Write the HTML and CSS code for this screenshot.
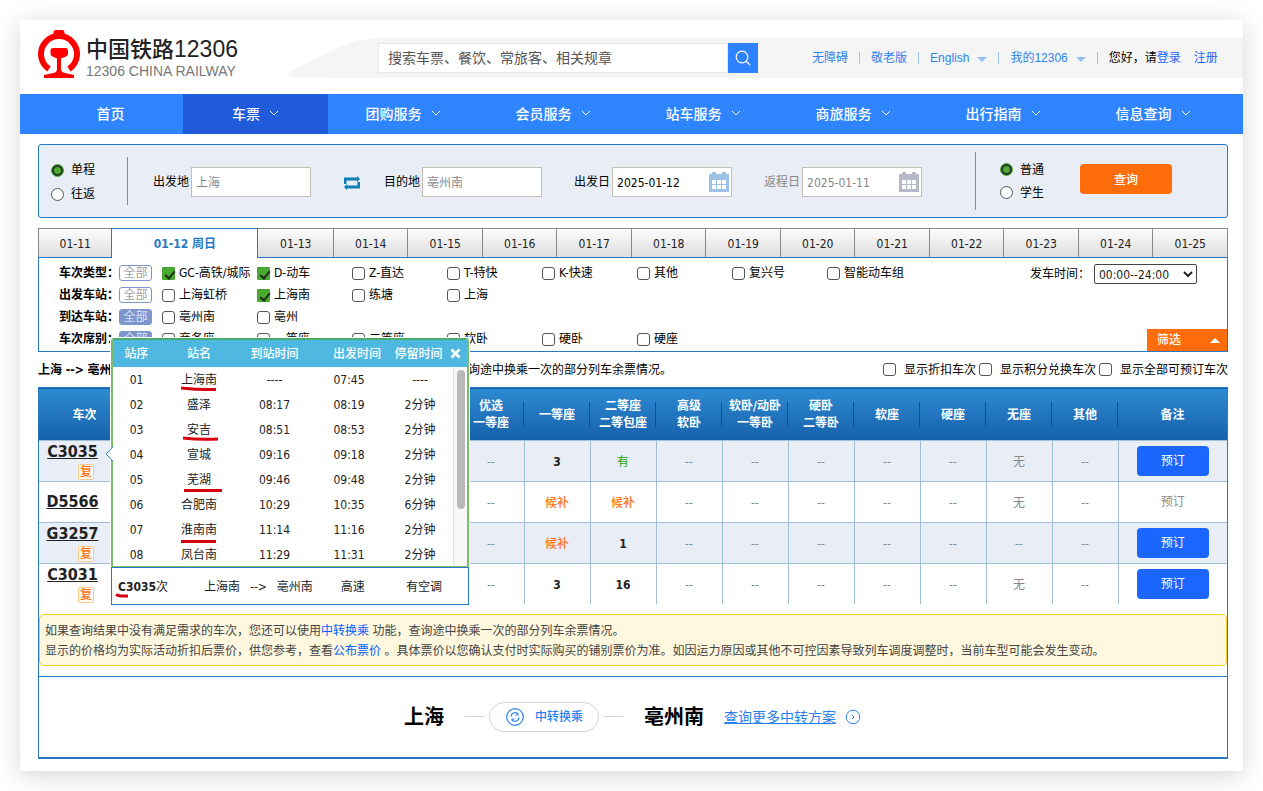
FILE: index.html
```html
<!DOCTYPE html>
<html lang="zh-CN">
<head>
<meta charset="utf-8">
<title>中国铁路12306</title>
<link rel="stylesheet" href="styles.css">
</head>
<body>
<div class="page">
  <header class="header">
    <a class="logo" href="#">
      <svg class="logo-mark" width="42" height="48" viewBox="0 0 42 48" aria-hidden="true">
        <path d="M15.500 2.500Q15.500 0 18 0H24Q26.500 0 26.500 2.500V5H15.500Z" fill="#f00"/>
        <path d="M11 39A18 18 0 1 1 31 39" fill="none" stroke="#f00" stroke-width="6"/>
        <path d="M15 18H27.500Q30 18 30 21V24Q30 26 27 27L23 28.500V39Q23 42 27 43L36 45V48H6V45L15.500 43Q19 42 19 39V28.500L15.500 27Q12.500 26 12.500 24V21Q12.500 18 15 18Z" fill="#f00"/>
      </svg>
      <span class="logo-text">
        <span class="logo-name">中国铁路<span class="logo-num">12306</span></span>
        <span class="logo-sub">12306 CHINA RAILWAY</span>
      </span>
    </a>
    <div class="topbar">
      <svg class="topbar-curve" width="90" height="40" viewBox="0 0 90 40" aria-hidden="true"><path d="M90 0Q68 1 54 8L8 30Q0 33 0 37Q1 39 8 39L40 40H90Z" fill="#f5f5f5"/></svg>
      <div class="topbar-body">
        <form class="search">
          <input class="search-input" type="text" aria-label="搜索" placeholder="搜索车票、餐饮、常旅客、相关规章">
          <button class="search-btn" type="button" aria-label="搜索">
            <svg width="16" height="16" viewBox="0 0 16 16" fill="none" stroke="#fff" stroke-width="1.200"><circle cx="7" cy="7" r="5.800"/><path d="M11 11L15 15"/></svg>
          </button>
        </form>
        <nav class="links">
          <a href="#">无障碍</a><i class="sep"></i>
          <a href="#">敬老版</a><i class="sep"></i>
          <a href="#">English<b class="caret"></b></a><i class="sep"></i>
          <a href="#">我的12306<b class="caret"></b></a><i class="sep"></i>
          <span class="hello">您好，请<a class="strong" href="#">登录</a></span>
          <a class="strong register" href="#">注册</a>
        </nav>
      </div>
    </div>
  </header>

  <nav class="mainnav">
    <a class="nav-item short" href="#">首页</a>
    <a class="nav-item short active" href="#">车票<svg class="chev" viewBox="0 0 10 6"><path d="M1 1L5 5L9 1"/></svg></a>
    <a class="nav-item" href="#">团购服务<svg class="chev" viewBox="0 0 10 6"><path d="M1 1L5 5L9 1"/></svg></a>
    <a class="nav-item" href="#">会员服务<svg class="chev" viewBox="0 0 10 6"><path d="M1 1L5 5L9 1"/></svg></a>
    <a class="nav-item" href="#">站车服务<svg class="chev" viewBox="0 0 10 6"><path d="M1 1L5 5L9 1"/></svg></a>
    <a class="nav-item" href="#">商旅服务<svg class="chev" viewBox="0 0 10 6"><path d="M1 1L5 5L9 1"/></svg></a>
    <a class="nav-item" href="#">出行指南<svg class="chev" viewBox="0 0 10 6"><path d="M1 1L5 5L9 1"/></svg></a>
    <a class="nav-item" href="#">信息查询<svg class="chev" viewBox="0 0 10 6"><path d="M1 1L5 5L9 1"/></svg></a>
  </nav>

  <main class="content">
    <form class="query">
      <div class="radios trip">
        <label><input type="radio" name="trip" checked>单程</label>
        <label><input type="radio" name="trip">往返</label>
      </div>
      <div class="fields">
        <label class="field">出发地<input class="box" type="text" placeholder="上海"></label>
        <button class="swap" type="button" aria-label="交换">
          <svg width="16" height="14" viewBox="0 0 16 14" fill="#0f7fb5"><path d="M0 1.500H13V0L16 3L13 6V4.500H2.500V8H0Z"/><path d="M16 12.500H3V14L0 11L3 8V9.500H13.500V6H16Z"/></svg>
        </button>
        <label class="field">目的地<input class="box" type="text" placeholder="亳州南"></label>
        <label class="field date">出发日<span class="datebox"><input class="box" type="text" value="2025-01-12"><svg class="cal blue" width="20" height="20" viewBox="0 0 20 20"><path d="M0 2H3V0H7V2H13V0H17V2H20V20H0Z" fill="currentColor"/><g fill="#fff"><path d="M3 8H7V12H3ZM8 8H12V12H8ZM13 8H17V12H13ZM3 13H7V17H3ZM8 13H12V17H8ZM13 13H17V17H13Z"/></g></svg></span></label>
        <label class="field date off">返程日<span class="datebox"><input class="box" type="text" value="2025-01-11"><svg class="cal gray" width="20" height="20" viewBox="0 0 20 20"><path d="M0 2H3V0H7V2H13V0H17V2H20V20H0Z" fill="currentColor"/><g fill="#fff"><path d="M3 8H7V12H3ZM8 8H12V12H8ZM13 8H17V12H13ZM3 13H7V17H3ZM8 13H12V17H8ZM13 13H17V17H13Z"/></g></svg></span></label>
      </div>
      <div class="radios kind">
        <label><input type="radio" name="kind" checked>普通</label>
        <label><input type="radio" name="kind">学生</label>
      </div>
      <button class="submit" type="button">查询</button>
    </form>

    <div class="days">
      <button class="day" type="button">01-11</button>
      <button class="day current" type="button">01-12 周日</button>
      <button class="day" type="button">01-13</button>
      <button class="day" type="button">01-14</button>
      <button class="day" type="button">01-15</button>
      <button class="day" type="button">01-16</button>
      <button class="day" type="button">01-17</button>
      <button class="day" type="button">01-18</button>
      <button class="day" type="button">01-19</button>
      <button class="day" type="button">01-20</button>
      <button class="day" type="button">01-21</button>
      <button class="day" type="button">01-22</button>
      <button class="day" type="button">01-23</button>
      <button class="day" type="button">01-24</button>
      <button class="day" type="button">01-25</button>
    </div>

    <section class="filters">
      <div class="filter-rows">
        <div class="frow"><b>车次类型：</b><button class="all" type="button">全部</button>
          <label><input type="checkbox" checked>GC-高铁/城际</label><label><input type="checkbox" checked>D-动车</label><label><input type="checkbox">Z-直达</label><label><input type="checkbox">T-特快</label><label><input type="checkbox">K-快速</label><label><input type="checkbox">其他</label><label><input type="checkbox">复兴号</label><label><input type="checkbox">智能动车组</label></div>
        <div class="frow"><b>出发车站：</b><button class="all" type="button">全部</button>
          <label><input type="checkbox">上海虹桥</label><label><input type="checkbox" checked>上海南</label><label><input type="checkbox">练塘</label><label><input type="checkbox">上海</label></div>
        <div class="frow"><b>到达车站：</b><button class="all on" type="button">全部</button>
          <label><input type="checkbox">亳州南</label><label><input type="checkbox">亳州</label></div>
        <div class="frow"><b>车次席别：</b><button class="all on" type="button">全部</button>
          <label><input type="checkbox">商务座</label><label><input type="checkbox">一等座</label><label><input type="checkbox">二等座</label><label><input type="checkbox">软卧</label><label><input type="checkbox">硬卧</label><label><input type="checkbox">硬座</label></div>
      </div>
      <div class="filter-side">
        <label class="depart">发车时间：<span class="selwrap"><select><option>00:00--24:00</option></select><svg width="10" height="7" viewBox="0 0 10 7"><path d="M1 1L5 5L9 1" fill="none" stroke="#222" stroke-width="2"/></svg></span></label>
        <button class="sift" type="button">筛选<i></i></button>
      </div>
    </section>

    <div class="status">
      <b class="route">上海 --&gt; 亳州</b>
      <span class="tip">询途中换乘一次的部分列车余票情况。</span>
      <div class="opts">
        <label><input type="checkbox">显示折扣车次</label>
        <label><input type="checkbox">显示积分兑换车次</label>
        <label><input type="checkbox">显示全部可预订车次</label>
      </div>
    </div>

    <div class="results">
      <table class="trains">
        <colgroup><col class="c-train"><col><col class="c-seat"><col class="c-seat"><col class="c-seat"><col class="c-seat"><col class="c-seat"><col class="c-seat"><col class="c-seat"><col class="c-seat"><col class="c-seat"><col class="c-seat"><col class="c-act"></colgroup>
        <thead>
          <tr><th>车次</th><th></th><th>优选<br>一等座</th><th>一等座</th><th>二等座<br>二等包座</th><th>高级<br>软卧</th><th>软卧/动卧<br>一等卧</th><th>硬卧<br>二等卧</th><th>软座</th><th>硬座</th><th>无座</th><th>其他</th><th>备注</th></tr>
        </thead>
        <tbody>
          <tr><td class="no"><a href="#">C3035</a><em>复</em></td><td></td><td>--</td><td class="n">3</td><td class="yes">有</td><td>--</td><td>--</td><td>--</td><td>--</td><td>--</td><td>无</td><td>--</td><td><button class="book" type="button">预订</button></td></tr>
          <tr><td class="no"><a href="#">D5566</a></td><td></td><td>--</td><td class="wait">候补</td><td class="wait">候补</td><td>--</td><td>--</td><td>--</td><td>--</td><td>--</td><td>无</td><td>--</td><td>预订</td></tr>
          <tr><td class="no"><a href="#">G3257</a><em>复</em></td><td></td><td>--</td><td class="wait">候补</td><td class="n">1</td><td>--</td><td>--</td><td>--</td><td>--</td><td>--</td><td>--</td><td>--</td><td><button class="book" type="button">预订</button></td></tr>
          <tr><td class="no"><a href="#">C3031</a><em>复</em></td><td></td><td>--</td><td class="n">3</td><td class="n">16</td><td>--</td><td>--</td><td>--</td><td>--</td><td>--</td><td>无</td><td>--</td><td><button class="book" type="button">预订</button></td></tr>
        </tbody>
      </table>

      <div class="notice">
        <p>如果查询结果中没有满足需求的车次，您还可以使用<a href="#">中转换乘</a> 功能，查询途中换乘一次的部分列车余票情况。</p>
        <p>显示的价格均为实际活动折扣后票价，供您参考，查看<a href="#">公布票价</a> 。具体票价以您确认支付时实际购买的铺别票价为准。如因运力原因或其他不可控因素导致列车调度调整时，当前车型可能会发生变动。</p>
      </div>

      <section class="transfer">
        <b class="city">上海</b>
        <i class="dash"></i>
        <button class="pill" type="button">
          <svg width="18" height="18" viewBox="0 0 18 18" fill="none" stroke="#2a7ff0" stroke-width="1.200"><circle cx="9" cy="9" r="8.300"/><path d="M5 8.500A4 4 0 0 1 11.500 5.500L12.500 6.500M9.500 7H12.500M13 9.500A4 4 0 0 1 6.500 12.500L5.500 11.500M8.500 11H5.500"/></svg>
          中转换乘
        </button>
        <i class="dash"></i>
        <b class="city">亳州南</b>
        <a class="more" href="#">查询更多中转方案</a>
        <svg width="16" height="16" viewBox="0 0 16 16" fill="none" stroke="#2a7ff0" stroke-width="1"><circle cx="8" cy="8" r="6.800"/><path d="M7 6L9 8L7 10"/></svg>
      </section>
    </div>

    <aside class="popup">
      <svg class="pointer" width="8" height="14" viewBox="0 0 8 14"><path d="M8 0L1 7L8 14" fill="#fff" stroke="#2a93b8"/></svg>
      <div class="stops">
        <div class="stops-head"><span>站序</span><span>站名</span><span>到站时间</span><span class="dep">出发时间</span><span>停留时间</span>
          <button type="button" aria-label="关闭"><svg width="11" height="11" viewBox="0 0 11 11"><path d="M1.500 1.500L9.500 9.500M9.500 1.500L1.500 9.500" stroke="#fff" stroke-width="2.600"/></svg></button></div>
        <div class="stops-body">
          <table>
            <colgroup><col class="s1"><col class="s2"><col class="s3"><col class="s4"><col></colgroup>
            <tr><td>01</td><td><span class="mark">上海南<svg viewBox="0 0 36 6"><path d="M0 2Q18 4 35 3.500"/></svg></span></td><td>----</td><td>07:45</td><td>----</td></tr>
            <tr><td>02</td><td>盛泽</td><td>08:17</td><td>08:19</td><td>2分钟</td></tr>
            <tr><td>03</td><td><span class="mark">安吉<svg viewBox="0 0 36 6"><path d="M2 2Q18 4 37 3"/></svg></span></td><td>08:51</td><td>08:53</td><td>2分钟</td></tr>
            <tr><td>04</td><td>宣城</td><td>09:16</td><td>09:18</td><td>2分钟</td></tr>
            <tr><td>05</td><td><span class="mark">芜湖<svg viewBox="0 0 36 6"><path d="M3 4.500H41"/></svg></span></td><td>09:46</td><td>09:48</td><td>2分钟</td></tr>
            <tr><td>06</td><td>合肥南</td><td>10:29</td><td>10:35</td><td>6分钟</td></tr>
            <tr><td>07</td><td><span class="mark">淮南南<svg viewBox="0 0 36 6"><path d="M0 5.500H35"/></svg></span></td><td>11:14</td><td>11:16</td><td>2分钟</td></tr>
            <tr><td>08</td><td>凤台南</td><td>11:29</td><td>11:31</td><td>2分钟</td></tr>
          </table>
          <div class="scroll"><i></i></div>
        </div>
      </div>
      <div class="summary">
        <span class="mark code"><b>C3035</b>次<svg viewBox="0 0 36 6"><path d="M0 1.500Q3 3.500 12 3"/></svg></span>
        <span>上海南</span><span>--&gt;</span><span>亳州南</span><span>高速</span><span>有空调</span>
      </div>
    </aside>
  </main>
</div>
</body>
</html>
```
FILE: styles.css
```css
* { box-sizing: border-box; }

body {
  margin: 0;
  padding: 20px;
  background: #fff;
  color: #000;
  font: 12px/20px "DejaVu Sans Condensed", "Noto Sans CJK SC", sans-serif;
}

button, input, select { font: inherit; color: inherit; margin: 0; padding: 0; }
button { border: 0; background: none; cursor: pointer; }
a { color: inherit; text-decoration: none; }
svg { display: block; flex: none; }

.page { background: #fff; padding-bottom: 12px; box-shadow: 0 4px 24px rgba(0, 0, 0, .17); }

/* header */
.header { display: flex; justify-content: space-between; height: 74px; padding-left: 18px; }
.logo { display: flex; gap: 6px; margin-top: 10px; height: 48px; }
.logo-text { display: flex; flex-direction: column; padding-top: 2px; white-space: nowrap; }
.logo-name { color: #222; font: 500 22px/30px "Noto Sans CJK SC", sans-serif; }
.logo-num { font: 23px/30px "Liberation Sans", sans-serif; }
.logo-sub { color: #777; font: 14px/14px "Liberation Sans", sans-serif; }
.topbar { display: flex; flex: 0 0 955px; height: 40px; margin-top: 18px; }
.topbar-body { display: flex; flex: 1; align-items: center; background: #f5f5f5; }
.search { display: flex; flex: 0 0 380px; height: 30px; }
.search-input {
  flex: 1; min-width: 0; padding: 0 9px 2px; border: 1px solid #e8e8e8; border-radius: 0; background: #fff;
  font: 14px/26px "Noto Sans CJK SC", sans-serif; outline: 0;
}
.search-input::placeholder { color: #555; opacity: 1; }
.search-btn { display: grid; place-items: center; width: 30px; background: #2e82ff; }
.links {
  display: flex; align-items: center; flex: 1; margin-left: 54px; color: #2e82f0; white-space: nowrap;
  font-family: "Liberation Sans", "Noto Sans CJK SC", sans-serif;
}
.sep { width: 1px; height: 12px; margin: 0 11px; background: #9cc5f5; }
.caret { display: inline-block; margin-left: 8px; border: 5px solid transparent; border-top-color: #93bff5; border-bottom: 0; }
.hello { color: #000; }
.strong { color: #1a66ff; }
.register { margin-left: 13px; }

/* main navigation */
.mainnav { display: flex; height: 40px; padding: 0 15px 0 18px; background: #2f85ff; }
.nav-item {
  display: flex; flex: 150 1 0; align-items: center; justify-content: center; gap: 9px; padding-bottom: 2px;
  color: #fff; font: 500 14px/20px "Noto Sans CJK SC", sans-serif;
}
.nav-item.short { flex-grow: 145; }
.nav-item.active { background: #205bdc; }
.chev { width: 10px; height: 6px; fill: none; stroke: #fff; }

.content { position: relative; padding: 10px 15px 0 18px; }

/* form controls */
input[type="radio"], input[type="checkbox"] {
  appearance: none; flex: none; position: relative; width: 13px; height: 13px; border: 1px solid #555; background: #fff;
}
input[type="radio"] { border-radius: 50%; }
input[type="radio"]:checked { border-color: #44a52e; background: #4eab32; box-shadow: inset 0 0 0 2px #26332a; }
input[type="checkbox"] { border-radius: 3px; }
input[type="checkbox"]:checked { border-color: #44a52e; border-radius: 1px; background: #4aaa31; }
input[type="checkbox"]:checked::after {
  content: ""; position: absolute; left: 4px; top: 1px; width: 4px; height: 8px;
  border: solid #1c2b1a; border-width: 0 2px 2px 0; transform: rotate(40deg);
}

/* query box */
.query {
  display: flex; align-items: center; height: 74px; padding-left: 12px;
  border: 1px solid #2878c3; border-radius: 3px; background: #e8edf6;
}
.radios { display: flex; flex-direction: column; justify-content: center; gap: 4px; }
.radios label { display: flex; align-items: center; gap: 7px; }
.trip { width: 77px; height: 48px; padding-top: 2px; border-right: 1px solid #4f97d3; }
.fields { display: flex; flex: 1; align-items: center; padding: 2px 0 0 25px; }
.field { display: flex; align-items: center; gap: 2px; white-space: nowrap; }
.box { width: 120px; height: 30px; padding: 2px 4px 0; border: 1px solid #c3bfb6; border-radius: 0; background: #fff; color: #000; outline: 0; }
.box::placeholder { color: #888; opacity: 1; }
.swap { padding: 2px 24px 0 33px; }
.date { margin-left: 32px; }
.datebox { position: relative; }
.datebox .box { display: block; }
.off, .off .box { color: #888; }
.cal { position: absolute; right: 3px; top: 5px; }
.cal.blue { color: #9dc2e6; }
.cal.gray { color: #b6b9ca; }
.kind { width: 105px; height: 58px; padding-left: 24px; border-left: 1px solid #4f97d3; gap: 3px; }
.kind label { line-height: 20px; }
.submit { width: 92px; height: 30px; margin: 0 55px 4px 0; padding-top: 2px; border-radius: 4px; background: #ff6c0a; color: #fff; font-weight: 500; }

/* date tabs */
.days {
  display: grid; grid-template-columns: 73fr 146fr repeat(13, minmax(0, 74fr)); height: 30px; margin-top: 10px;
  border-right: 1px solid #888; border-bottom: 1px solid #2878c3;
}
.day {
  padding-top: 2px; border-top: 1px solid #888; border-left: 1px solid #888;
  background: linear-gradient(#fcfcfc, #dedede); color: #222;
}
.day.current {
  margin-bottom: -1px; padding-top: 0; border: 1px solid #2878c3; border-bottom: 0;
  background: #fff; color: #2878c3; font-weight: bold;
}
.day.current + .day { border-left: 0; }

/* filters */
.filters { display: flex; justify-content: space-between; border: 1px solid #2878c3; border-top: 0; }
.filter-rows { padding: 4px 0 1px 20px; }
.frow { display: flex; align-items: center; height: 22px; white-space: nowrap; }
.frow b { width: 60px; }
.frow label { display: flex; align-items: center; gap: 4px; width: 95px; }
.all { width: 33px; height: 16px; margin-right: 10px; border: 1px solid #7d96ce; border-radius: 3px; color: #777; line-height: 14px; font-weight: 300; }
.all.on { background: #7d96ce; color: #fff; }
.filter-side { display: flex; flex-direction: column; justify-content: space-between; align-items: flex-end; }
.depart { display: flex; align-items: center; gap: 4px; margin: 6px 30px 0 0; }
.selwrap { position: relative; }
.selwrap select { display: block; appearance: none; width: 103px; height: 20px; padding-left: 4px; border: 1px solid #444; border-radius: 2px; background: #fff; color: #222; }
.selwrap svg { position: absolute; right: 4px; top: 7px; pointer-events: none; }
.sift { display: flex; align-items: center; justify-content: space-between; width: 80px; height: 22px; padding: 0 7px 0 10px; background: #ff6c0a; color: #fff; font-weight: 500; }
.sift i { border: 5px solid transparent; border-top: 0; border-bottom-color: #fff; }

/* result summary line */
.status { display: flex; align-items: center; height: 35px; white-space: nowrap; }
.route { width: 430px; }
.opts { display: flex; gap: 3px; margin-left: auto; }
.opts label { display: flex; align-items: center; gap: 8px; }

/* results */
.results { border: 1px solid #2878c3; border-width: 0 1px; }
.trains { width: 100%; border-collapse: collapse; table-layout: fixed; text-align: center; }
.c-train { width: 91px; }
.c-seat { width: 66px; }
.c-act { width: 109px; }
.trains thead tr { height: 53px; background: linear-gradient(#2d8bd1, #1660ab); border-top: 1px solid #2878c3; }
.trains th {
  padding: 2px 0 0; color: #fff; line-height: 17px; white-space: nowrap;
  background: linear-gradient(#1c4a8c, #1c4a8c) right center / 1px 25px no-repeat;
}
.trains th:first-child, .trains th:nth-child(2), .trains th:last-child { background: none; }
.trains td { height: 41px; padding: 2px 0 0; border-top: 1px solid #9ebfd6; border-left: 1px solid #9ebfd6; color: #888; }
.trains td:first-child, .trains td:nth-child(2) { border-left: 0; }
.trains td:last-child { padding-top: 0; }
.trains tbody tr:nth-child(odd) { background: #e8edf6; }
.trains tbody tr:last-child td { height: 40px; }
.trains .no { padding: 0 24px 0 0; color: #222; }
.no a { display: block; font-size: 16px; line-height: 20px; font-weight: bold; text-decoration: underline; }
.no em {
  display: block; width: 16px; height: 16px; margin: 2px 0 0 39px; border: 1px solid #ffc98c; border-radius: 2px;
  background: #fffaf3; color: #ff6c0a; font-style: normal; line-height: 14px; font-weight: 500;
}
.trains .n { color: #222; font-weight: bold; }
.trains .yes { color: #26a306; }
.trains .wait { color: #ff7519; font-weight: 500; }
.book { width: 72px; height: 30px; border-radius: 4px; background: #1a66ff; color: #fff; }

.notice { margin-top: 10px; padding: 6px 5px 4px; border: 1px solid #f5ce1a; border-radius: 5px; background: #fff8df; color: #444; }
.notice p { margin: 0; }
.notice a { color: #0060ff; }

.transfer {
  display: flex; align-items: center; height: 83px; margin-top: 10px; padding-left: 365px;
  border-top: 1px solid #2878c3; border-bottom: 2px solid #2878c3; white-space: nowrap;
}
.city { font-size: 20px; line-height: 28px; }
.dash { width: 20px; height: 1px; margin: 0 4px 0 21px; background: #d5d5d5; }
.pill { display: flex; align-items: center; gap: 11px; width: 110px; height: 30px; padding-left: 16px; border: 1px solid #d5d5d5; border-radius: 15px; color: #2a7ff0; font-weight: 500; }
.pill + .dash { margin: 0 21px 0 4px; }
.more { margin: 0 9px 0 20px; color: #2a7ff0; font-size: 14px; text-decoration: underline; }

/* timetable popup, floats over the results */
.popup { position: absolute; left: 91px; top: 204px; width: 358px; color: #222; background: #fff; box-shadow: 0 0 0 1px #fff; }
.pointer { position: absolute; left: -6px; top: 109px; z-index: 1; }
.stops { border: 2px solid #7abf68; border-top-color: #4bab6c; border-radius: 3px; }
.stops-head { display: grid; grid-template-columns: 47px 78px 73px 76px 63px 1fr; align-items: center; height: 27px; background: #4fb8e0; color: #fff; text-align: center; font-weight: 500; white-space: nowrap; }
.stops-head .dep { padding-left: 16px; }
.stops-head button { display: grid; justify-content: start; }
.stops-body { display: flex; height: 199px; }
.stops-body table { flex: 1; border-collapse: collapse; table-layout: fixed; text-align: center; }
.stops-body td { height: 25px; padding: 0; }
.s1 { width: 47px; }
.s2 { width: 78px; }
.s3 { width: 73px; }
.s4 { width: 76px; }
.scroll { width: 14px; padding: 3px 2px 0 3px; border-left: 1px solid #e2e2e2; background: #f8f8f8; }
.scroll i { display: block; height: 139px; border-radius: 4px; background: #b9b9b9; }
.mark { position: relative; display: inline-block; }
.mark svg { position: absolute; left: 50%; top: 16px; width: 36px; height: 6px; margin-left: -18px; overflow: visible; fill: none; stroke: #d7000f; stroke-width: 3; }
.summary { display: flex; align-items: center; height: 38px; margin-top: -1px; padding: 2px 0 0 6px; border: 1px solid #2878c3; white-space: nowrap; }
.summary span:nth-child(2) { margin-left: 36px; }
.summary span:nth-child(3), .summary span:nth-child(4) { margin-left: 10px; }
.summary span:nth-child(5) { margin-left: 28px; }
.summary span:nth-child(6) { margin-left: 41px; }
.mark.code svg { left: 0; margin-left: -2px; }
```
